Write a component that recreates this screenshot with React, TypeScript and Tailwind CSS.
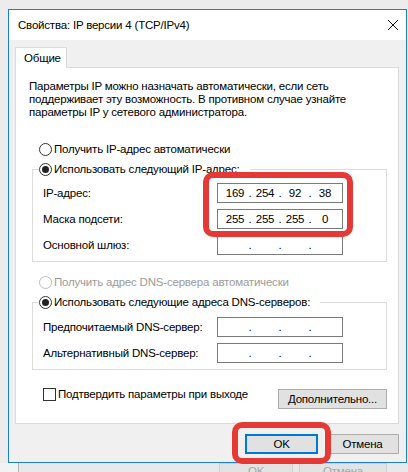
import React from 'react';

const IpField = ({ parts }: { parts?: string[] }) => {
  const p = parts ?? ['', '', '', ''];
  return (
    <div className="flex h-[20px] w-[126px] items-center border border-[#7a7a7a] bg-white px-[4px] leading-[13px]">
      {p.map((v, i) => (
        <React.Fragment key={i}>
          {i > 0 && <span className="w-[4px] text-center">.</span>}
          <span className="w-[26px] text-center">{v}</span>
        </React.Fragment>
      ))}
    </div>
  );
};

const Radio = ({ checked, disabled }: { checked?: boolean; disabled?: boolean }) => (
  <span
    className={
      'flex h-[13px] w-[13px] shrink-0 items-center justify-center rounded-full border bg-white ' +
      (disabled ? 'border-[#bcbcbc]' : 'border-[#333333]')
    }
  >
    {checked && <span className="h-[7px] w-[7px] rounded-full bg-[#222222]" />}
  </span>
);

const Row = ({ label, parts }: { label: string; parts?: string[] }) => (
  <div className="flex items-center">
    <span className="w-[174px]">{label}</span>
    <IpField parts={parts} />
  </div>
);

const App = () => {
  return (
    <div className="relative flex h-[472px] w-[408px] flex-col overflow-hidden bg-[#ececec] pl-[8px] pt-[9px] font-['Liberation_Sans',sans-serif] text-[11.5px] leading-[13px] tracking-[-0.2px] text-black">
      {/* dialog window */}
      <div className="flex h-[454px] w-[399px] flex-col border border-[#1a7fd4] bg-[#f0f0f0]">
        <div className="flex h-[30px] items-center justify-between bg-white pl-[9px] pr-[8px]">
          <span>Свойства: IP версии 4 (TCP/IPv4)</span>
          <svg width="12" height="12" viewBox="0 0 12 12" className="mr-[-1px]">
            <path d="M1 1 L11 11 M11 1 L1 11" stroke="#111" strokeWidth="1" fill="none" />
          </svg>
        </div>

        <div className="flex flex-1 flex-col pl-[6px] pr-[7px] pt-[7px]">
          <div className="relative z-10 -mb-px flex h-[21px] w-[52px] items-center border border-b-0 border-[#d9d9d9] bg-white pl-[8px]">
            Общие
          </div>
          <div className="flex h-[357px] flex-col border border-[#d9d9d9] bg-white pl-[13px] pt-[12px]">
            <p>
              Параметры IP можно назначать автоматически, если сеть
              <br />
              поддерживает эту возможность. В противном случае узнайте
              <br />
              параметры IP у сетевого администратора.
            </p>

            <div className="ml-[10px] mt-[24px] flex h-[13px] items-center gap-[2px]">
              <Radio />
              <span>Получить IP-адрес автоматически</span>
            </div>

            <fieldset className="ml-[3px] mt-[7px] w-[355px] border border-[#dcdcdc] pb-[6px]">
              <legend className="ml-[6px] pr-[10px]">
                <span className="flex h-[13px] items-center gap-[2px]">
                  <Radio checked />
                  <span>Использовать следующий IP-адрес:</span>
                </span>
              </legend>
              <div className="flex flex-col gap-[6px] pl-[10px] pt-[7px]">
                <Row label="IP-адрес:" parts={['169', '254', '92', '38']} />
                <Row label="Маска подсети:" parts={['255', '255', '255', '0']} />
                <Row label="Основной шлюз:" />
              </div>
            </fieldset>

            <div className="ml-[10px] mt-[14px] flex h-[13px] items-center gap-[2px] text-[#9b9b9b]">
              <Radio disabled />
              <span>Получить адрес DNS-сервера автоматически</span>
            </div>

            <fieldset className="ml-[3px] mt-[7px] w-[355px] border border-[#dcdcdc] pb-[6px]">
              <legend className="ml-[6px] pr-[10px]">
                <span className="flex h-[13px] items-center gap-[2px]">
                  <Radio checked />
                  <span>Использовать следующие адреса DNS-серверов:</span>
                </span>
              </legend>
              <div className="flex flex-col gap-[6px] pl-[10px] pt-[8px]">
                <Row label="Предпочитаемый DNS-сервер:" />
                <Row label="Альтернативный DNS-сервер:" />
              </div>
            </fieldset>

            <div className="mr-[11px] mt-[18px] flex items-start justify-between pl-[14px]">
              <div className="flex h-[13px] items-center gap-[2px]">
                <span className="h-[13px] w-[13px] border border-[#333333] bg-white" />
                <span>Подтвердить параметры при выходе</span>
              </div>
              <div className="mt-[1px] flex h-[20px] w-[109px] items-center justify-center border border-[#adadad] bg-[#e1e1e1]">
                Дополнительно...
              </div>
            </div>
          </div>

          <div className="mt-[10px] flex justify-end gap-[8px]">
            <div className="flex h-[20px] w-[73px] items-center justify-center border-2 border-[#0078d7] bg-[#e1e1e1]">
              OK
            </div>
            <div className="flex h-[20px] w-[73px] items-center justify-center border border-[#adadad] bg-[#e1e1e1]">
              Отмена
            </div>
          </div>
        </div>
      </div>

      {/* window behind */}
      <div className="-ml-[8px] flex h-[9px]">
        <div className="w-[18px] bg-[#f2f2f2]" />
        <div className="flex flex-1 gap-[6px] border-l border-[#b5b5b5] bg-[#e9e9e9] pl-[200px]">
          <div className="h-[20px] w-[74px] border border-[#d0d0d0] bg-[#e3e3e3] pt-[1px] text-center leading-[12px] text-[#a8a8a8]">
            OK
          </div>
          <div className="h-[20px] w-[88px] border border-[#d0d0d0] bg-[#e3e3e3] pt-[1px] text-center leading-[12px] text-[#a8a8a8]">
            Отмена
          </div>
        </div>
      </div>

      {/* red highlight marks */}
      <div className="absolute left-[203px] top-[172px] h-[65px] w-[150px] rounded-[10px] border-[6px] border-[#e53935]" />
      <div className="absolute left-[232px] top-[422px] h-[42px] w-[99px] rounded-[10px] border-[6px] border-[#e53935]" />
    </div>
  );
};

export default App;
